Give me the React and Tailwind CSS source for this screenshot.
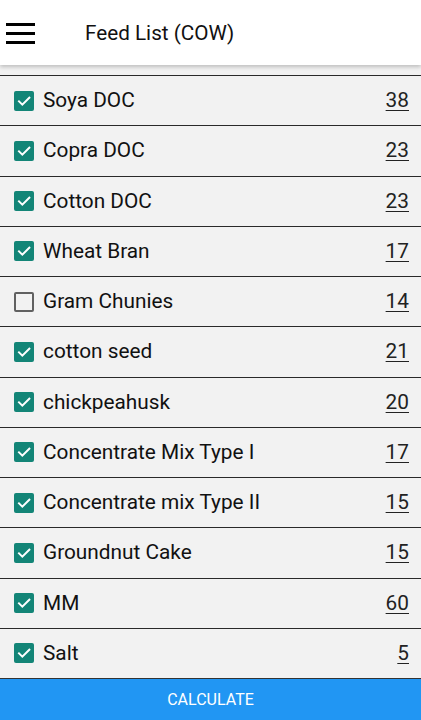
import React from "react";

const items = [
  ["Soya DOC", "38", true],
  ["Copra DOC", "23", true],
  ["Cotton DOC", "23", true],
  ["Wheat Bran", "17", true],
  ["Gram Chunies", "14", false],
  ["cotton seed", "21", true],
  ["chickpeahusk", "20", true],
  ["Concentrate Mix Type I", "17", true],
  ["Concentrate mix Type II", "15", true],
  ["Groundnut Cake", "15", true],
  ["MM", "60", true],
  ["Salt", "5", true],
];

function Check({ on }) {
  if (on)
    return (
      <div className="w-5 h-5 rounded-[2px] bg-[#138577] flex items-center justify-center shrink-0">
        <svg width="16" height="16" viewBox="0 0 24 24">
          <path d="M4.5 12.5l5 5L20 7" fill="none" stroke="#fff" strokeWidth="3" strokeLinecap="square" />
        </svg>
      </div>
    );
  return <div className="w-5 h-5 rounded-[2px] border-2 border-[#616161] shrink-0" />;
}

export default function App() {
  return (
    <div className="w-[421px] h-[720px] bg-[#f2f2f2] flex flex-col overflow-hidden" style={{ fontFamily: "Roboto, 'Noto Sans', sans-serif" }}>
      <div className="h-[65px] bg-white flex items-center shadow-[0_2px_4px_rgba(0,0,0,0.22)] relative z-10 shrink-0">
        <div className="ml-[6px] w-[29px] flex flex-col gap-[6px] mt-[2px]">
          <div className="h-[3px] bg-black" />
          <div className="h-[3px] bg-black" />
          <div className="h-[3px] bg-black" />
        </div>
        <div className="ml-[50px] text-[20.7px] text-[#111] mt-[3px]">Feed List (COW)</div>
      </div>
      <div className="h-[10px] shrink-0" />
      <div className="flex-1 flex flex-col">
        {items.map(([name, val, on]) => (
          <div key={name} className="h-[50.25px] border-t border-[#2a2a2a] flex items-center pl-[14px] pr-[12px]">
            <Check on={on} />
            <div className="ml-[9px] text-[20.8px] text-[#111] flex-1">{name}</div>
            <div className="text-[20.8px] text-[#222] underline underline-offset-[3px] decoration-1">{val}</div>
          </div>
        ))}
      </div>
      <div className="h-[42px] bg-[#2196f3] border-t border-[#333] flex items-center justify-center text-white text-[16px] shrink-0">
        CALCULATE
      </div>
    </div>
  );
}
